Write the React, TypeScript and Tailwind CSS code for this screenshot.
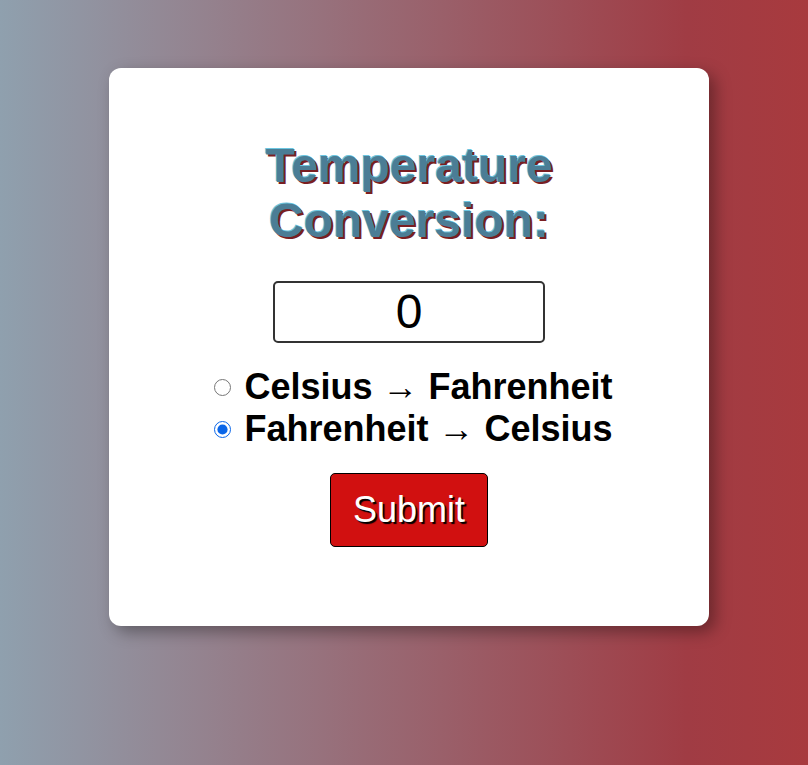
import React, { useState } from 'react';

export default function App() {
  const [value, setValue] = useState('0');
  const [mode, setMode] = useState<'c2f' | 'f2c'>('f2c');

  return (
    <div className="min-h-screen w-full flex justify-center items-start pt-[68px] pl-[10px] bg-[linear-gradient(to_right,#8fa0ae,#a03c44_85%,#a83a3e)] font-['Liberation_Sans',Arial,sans-serif]">
      <div className="w-[600px] h-[558px] bg-white rounded-xl shadow-[6px_6px_16px_rgba(0,0,0,0.35)] flex flex-col items-center pt-[70px]">
        {/* Title */}
        <h1 className="text-[48px] leading-[55px] font-bold text-center text-[#4b7d95] [text-shadow:-1px_-1px_0_#6cc6e0,2px_2px_0_#7a1e22]">
          Temperature
          <br />
          Conversion:
        </h1>

        {/* Input */}
        <input
          value={value}
          onChange={(e) => setValue(e.target.value)}
          className="mt-[33px] w-[272px] h-[62px] border-2 border-[#333] rounded-[5px] text-center text-[48px] text-black outline-none"
        />

        {/* Options */}
        <div className="mt-[23px] pl-[9px] flex flex-col items-start text-[36px] leading-[42px] font-bold text-black">
          <label className="flex items-center gap-[13px]">
            <input
              type="radio"
              name="mode"
              checked={mode === 'c2f'}
              onChange={() => setMode('c2f')}
              className="w-[17px] h-[17px] accent-[#0a66e8]"
            />
            <span>Celsius → Fahrenheit</span>
          </label>
          <label className="flex items-center gap-[13px]">
            <input
              type="radio"
              name="mode"
              checked={mode === 'f2c'}
              onChange={() => setMode('f2c')}
              className="w-[17px] h-[17px] accent-[#0a66e8]"
            />
            <span>Fahrenheit → Celsius</span>
          </label>
        </div>

        {/* Submit */}
        <button className="mt-[23px] w-[158px] h-[74px] bg-[#d11010] border border-black rounded-[5px] text-white text-[36px] [text-shadow:2px_2px_1px_#000]">
          Submit
        </button>
      </div>
    </div>
  );
}
